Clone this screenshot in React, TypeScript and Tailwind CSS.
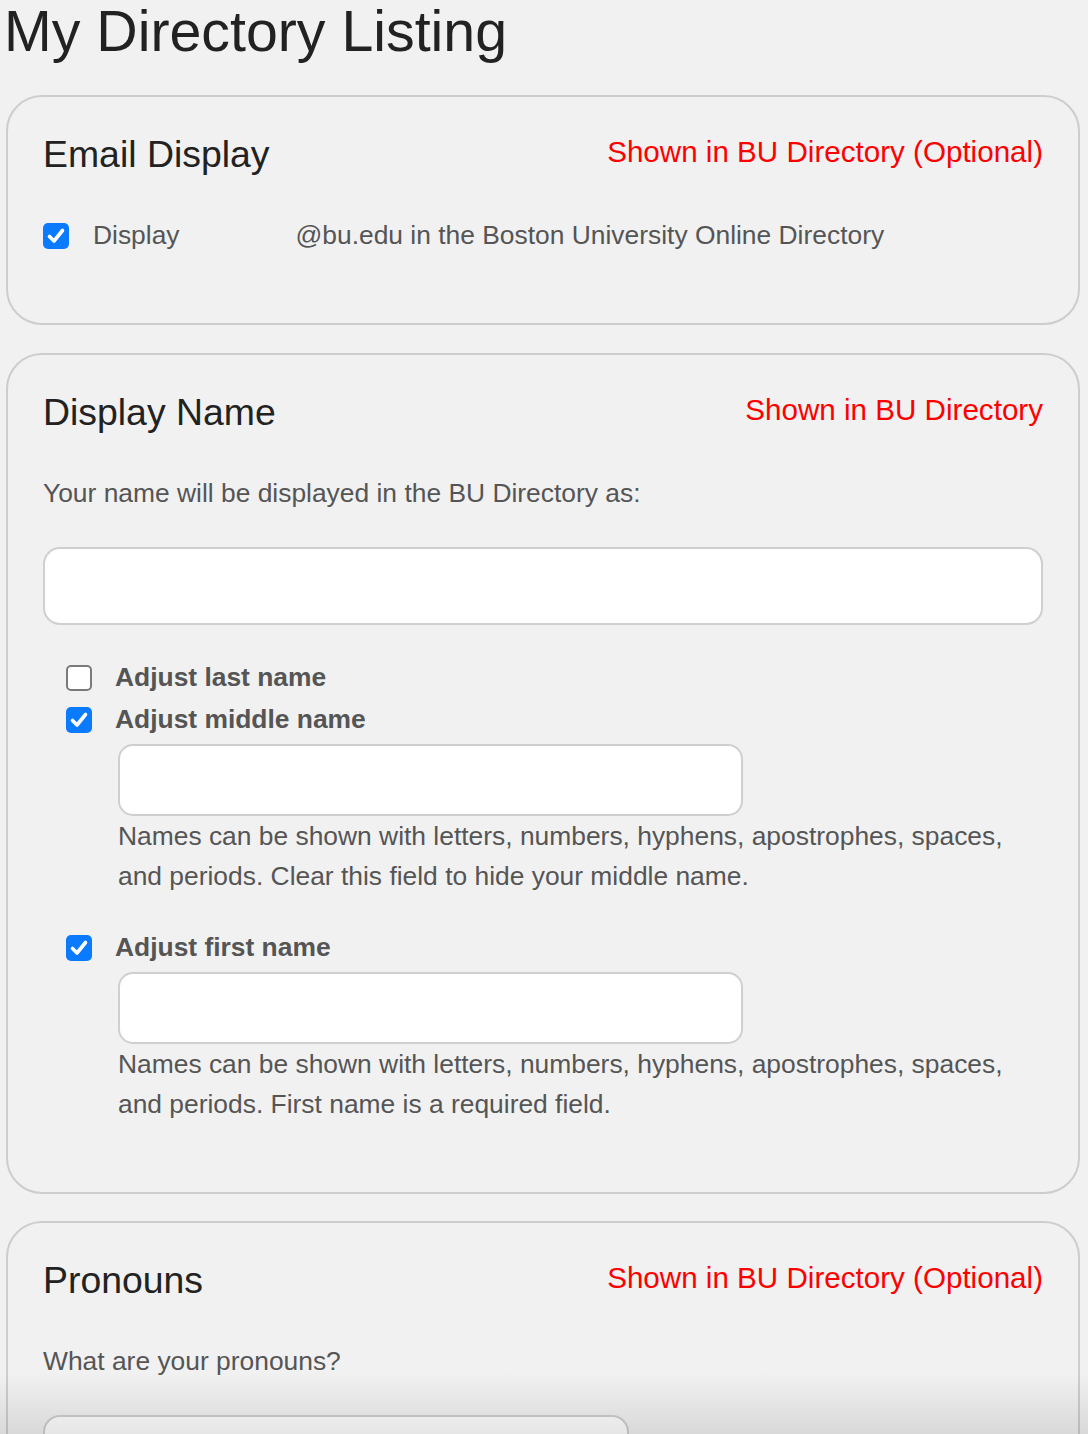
import React from "react";

function Check({ checked }: { checked: boolean }) {
  if (!checked) {
    return (
      <span className="inline-block w-[26px] h-[26px] rounded-[5px] border-2 border-[#7a7a7a] bg-white shrink-0" />
    );
  }
  return (
    <span className="inline-flex items-center justify-center w-[26px] h-[26px] rounded-[5px] bg-[#0a7aff] shrink-0">
      <svg width="22" height="22" viewBox="0 0 22 22" fill="none">
        <path d="M4.5 11.5 L9 16 L17.5 5.5" stroke="white" strokeWidth="3.6" strokeLinecap="round" strokeLinejoin="round" />
      </svg>
    </span>
  );
}

function Card({
  title,
  note,
  children,
  className,
}: {
  title: string;
  note: string;
  children: React.ReactNode;
  className: string;
}) {
  return (
    <section className={`ml-[6px] mr-[8px] border-2 border-[#cdcdcd] rounded-[36px] px-[35px] pt-[32px] ${className}`}>
      <div className="flex items-start justify-between">
        <h2 className="mt-[3px] text-[37.4px] leading-[44px] text-[#222]">{title}</h2>
        <span className="mt-[1px] text-[29.6px] leading-[44px] text-[#ff0000]">{note}</span>
      </div>
      {children}
    </section>
  );
}

function NameOption({ label, help }: { label: string; help?: React.ReactNode }) {
  return (
    <div>
      <div className="flex items-center h-[42px] pl-[23px] gap-[23px]">
        <Check checked={!!help} />
        <span className="text-[26.4px] font-bold text-[#555]">{label}</span>
      </div>
      {help && (
        <div className="pl-[75px] mt-[3px]">
          <div className="w-[625px] h-[72px] bg-white border-2 border-[#cfcfcf] rounded-[15px]" />
          <p className="text-[26.4px] leading-[40px] text-[#555] pr-[20px]">{help}</p>
        </div>
      )}
    </div>
  );
}

export default function App() {
  return (
    <div
      className="relative h-[1434px] overflow-hidden bg-[#f1f1f1]"
      style={{ fontFamily: '"Liberation Sans", Arial, Helvetica, sans-serif' }}
    >
      <h1 className="ml-[4px] text-[57.3px] leading-[62px] text-[#222] mb-[33px]">My Directory Listing</h1>

      <Card title="Email Display" note="Shown in BU Directory (Optional)" className="pb-[69px] mb-[28px]">
        <div className="flex items-center h-[36px] mt-[42px] text-[26.4px] text-[#555]">
          <Check checked />
          <span className="ml-[24px]">Display</span>
          <span className="ml-[116px]">@bu.edu in the Boston University Online Directory</span>
        </div>
      </Card>

      <Card title="Display Name" note="Shown in BU Directory" className="pb-[68px] mb-[27px]">
        <p className="mt-[39px] text-[26.4px] leading-[40px] text-[#555]">
          Your name will be displayed in the BU Directory as:
        </p>
        <div className="mt-[34px] h-[78px] bg-white border-2 border-[#cfcfcf] rounded-[17px]" />
        <div className="mt-[32px]">
          <NameOption label="Adjust last name" />
          <NameOption
            label="Adjust middle name"
            help="Names can be shown with letters, numbers, hyphens, apostrophes, spaces, and periods. Clear this field to hide your middle name."
          />
          <div className="mt-[31px]">
            <NameOption
              label="Adjust first name"
              help="Names can be shown with letters, numbers, hyphens, apostrophes, spaces, and periods. First name is a required field."
            />
          </div>
        </div>
      </Card>

      <Card title="Pronouns" note="Shown in BU Directory (Optional)" className="pb-[68px]">
        <p className="mt-[39px] text-[26.4px] leading-[40px] text-[#555]">What are your pronouns?</p>
        <div className="mt-[34px] w-[586px] h-[78px] bg-white border-2 border-[#cfcfcf] rounded-[17px]" />
      </Card>

      <div className="pointer-events-none absolute left-0 right-0 bottom-0 h-[62px] bg-linear-to-b from-transparent to-black/10" />
    </div>
  );
}
